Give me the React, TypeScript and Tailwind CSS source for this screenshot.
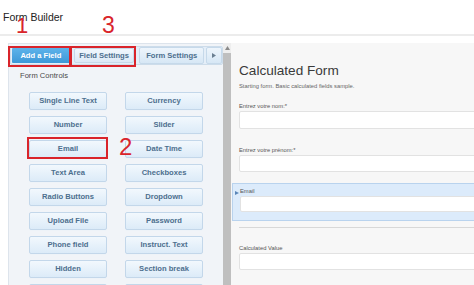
import React from "react";

const btns: [string, string][] = [
  ["Single Line Text", "Currency"],
  ["Number", "Slider"],
  ["Email", "Date Time"],
  ["Text Area", "Checkboxes"],
  ["Radio Buttons", "Dropdown"],
  ["Upload File", "Password"],
  ["Phone field", "Instruct. Text"],
  ["Hidden", "Section break"],
];

function Btn({ label }: { label: string }) {
  return (
    <div className="h-[18px] flex items-center justify-center rounded-[2px] border border-[#c3d7ea] bg-gradient-to-b from-[#f2f8fd] to-[#dcebf8] text-[7.6px] font-bold text-[#4d6f8e] shadow-[0_1px_0_#eef3f8]">
      {label}
    </div>
  );
}

function Field({ label, h = 17 }: { label: string; h?: number }) {
  return (
    <div className="flex flex-col">
      <div className="text-[5.8px] text-[#555] leading-[6px] h-[6px]">{label}</div>
      <div
        className="mt-[2px] bg-white border border-[#e2e2e2] rounded-[2px] w-[240px]"
        style={{ height: h }}
      />
    </div>
  );
}

export default function App() {
  return (
    <div
      className="relative w-[474px] h-[285px] overflow-hidden bg-white"
      style={{ fontFamily: '"Liberation Sans", Arial, sans-serif' }}
    >
      <div className="h-[34px] pl-[3px] pt-[11px] text-[10.5px] leading-[12px] text-[#222]">
        Form Builder
      </div>
      <div className="h-[2px] bg-[#ececec]" />
      <div className="flex mt-[7px] h-[242px]">
        {/* left panel */}
        <div className="ml-[8px] w-[218px] bg-[#f1f4f8] border-l border-t border-[#dde4ec] flex flex-col">
          <div className="mt-[2px] ml-[1px] w-[213px] h-[21px] flex items-center rounded-[2px] bg-[#e4eef8] border border-[#cddcea]">
            <div className="ml-[1px] w-[58px] h-[15px] flex items-center justify-center bg-gradient-to-b from-[#5db3ea] to-[#3c98d8] text-white text-[7.6px] font-bold rounded-[1px]">
              Add a Field
            </div>
            <div className="ml-[4px] w-[61px] h-[15px] flex items-center justify-center bg-gradient-to-b from-[#f1f7fd] to-[#dce9f6] text-[#4d6f8e] text-[7.6px] font-bold border border-[#c6d9ea] rounded-[2px]">
              Field Settings
            </div>
            <div className="ml-[5px] w-[65px] h-[17px] flex items-center justify-center bg-gradient-to-b from-[#eef5fc] to-[#d7e7f5] text-[#4d6f8e] text-[7.6px] font-bold border border-[#c6d9ea] rounded-[2px]">
              Form Settings
            </div>
            <div className="ml-[2px] w-[16px] h-[17px] flex items-center justify-center bg-gradient-to-b from-[#eef5fc] to-[#d7e7f5] border border-[#c6d9ea] rounded-[2px]">
              <svg width="4" height="5" viewBox="0 0 4 5">
                <path d="M0 0 L4 2.5 L0 5 Z" fill="#6b7f92" />
              </svg>
            </div>
          </div>
          <div className="ml-[11px] mt-[6px] text-[7.6px] leading-[10px] text-[#4a4a4a]">Form Controls</div>
          <div className="ml-[12px] mr-[10px] mt-[5px] h-[1px] bg-[#dbe2ea]" />
          <div className="ml-[20px] mt-[6px] grid grid-cols-[78px_78px] gap-x-[18px] gap-y-[6px]">
            {btns.map(([a, b]) => (
              <React.Fragment key={a}>
                <Btn label={a} />
                <Btn label={b} />
              </React.Fragment>
            ))}
            <div className="h-[18px] rounded-[2px] border border-[#c3d7ea] bg-gradient-to-b from-[#f2f8fd] to-[#dcebf8]" />
            <div className="h-[18px] rounded-[2px] border border-[#c3d7ea] bg-gradient-to-b from-[#f2f8fd] to-[#dcebf8]" />
          </div>
        </div>
        {/* scrollbar */}
        <div className="w-[10px] bg-[#eeeeee] flex flex-col items-center">
          <svg className="mt-[3px]" width="5" height="4" viewBox="0 0 5 4">
            <path d="M0 4 L2.5 0 L5 4 Z" fill="#8a8a8a" />
          </svg>
          <div className="mt-[3px] w-[8px] flex-1 bg-[#bfbfbf]" />
        </div>
        <div className="w-[2px] bg-white" />
        {/* right panel */}
        <div className="flex-1 bg-[#f7f7f7] flex flex-col">
          <div className="ml-[8px] mt-[20px] text-[13.6px] leading-[16px] text-[#3a3a3a]">Calculated Form</div>
          <div className="ml-[8px] mt-[4px] text-[5.8px] leading-[7px] text-[#666]">
            Starting form. Basic calculated fields sample.
          </div>
          <div className="ml-[8px] mt-[13px]">
            <Field label="Entrez votre nom:*" h={18} />
          </div>
          <div className="ml-[8px] mt-[18px]">
            <Field label="Entrez votre prénom:*" h={17} />
          </div>
          <div className="mt-[11px] ml-[1px] h-[38px] bg-[#dcebfb] border border-[#b9d3ee] relative pl-[7px] pt-[4px]">
            <svg className="absolute left-[2px] top-[7px]" width="4" height="4" viewBox="0 0 4 4">
              <path d="M0 0 L4 2 L0 4 Z" fill="#5a86b8" />
            </svg>
            <Field label="Email" h={16} />
          </div>
          <div className="ml-[8px] mt-[6px] h-[1px] bg-[#d8d8d8]" />
          <div className="ml-[8px] mt-[17px]">
            <Field label="Calculated Value" h={17} />
          </div>
        </div>
      </div>

      {/* annotations */}
      <div className="absolute left-[8px] top-[46px] w-[63px] h-[21px] border-2 border-[#d9242b]" />
      <div className="absolute left-[70px] top-[46px] w-[66px] h-[21px] border-2 border-[#d9242b]" />
      <div className="absolute left-[27px] top-[137px] w-[81px] h-[22px] border-2 border-[#d9242b]" />
      <div className="absolute left-[16px] top-[14px] text-[22px] leading-[24px] text-[#d9242b]">1</div>
      <div className="absolute left-[102px] top-[13px] text-[23px] leading-[24px] text-[#d9242b]">3</div>
      <div className="absolute left-[119px] top-[134px] text-[24px] leading-[26px] text-[#d9242b]">2</div>
    </div>
  );
}
